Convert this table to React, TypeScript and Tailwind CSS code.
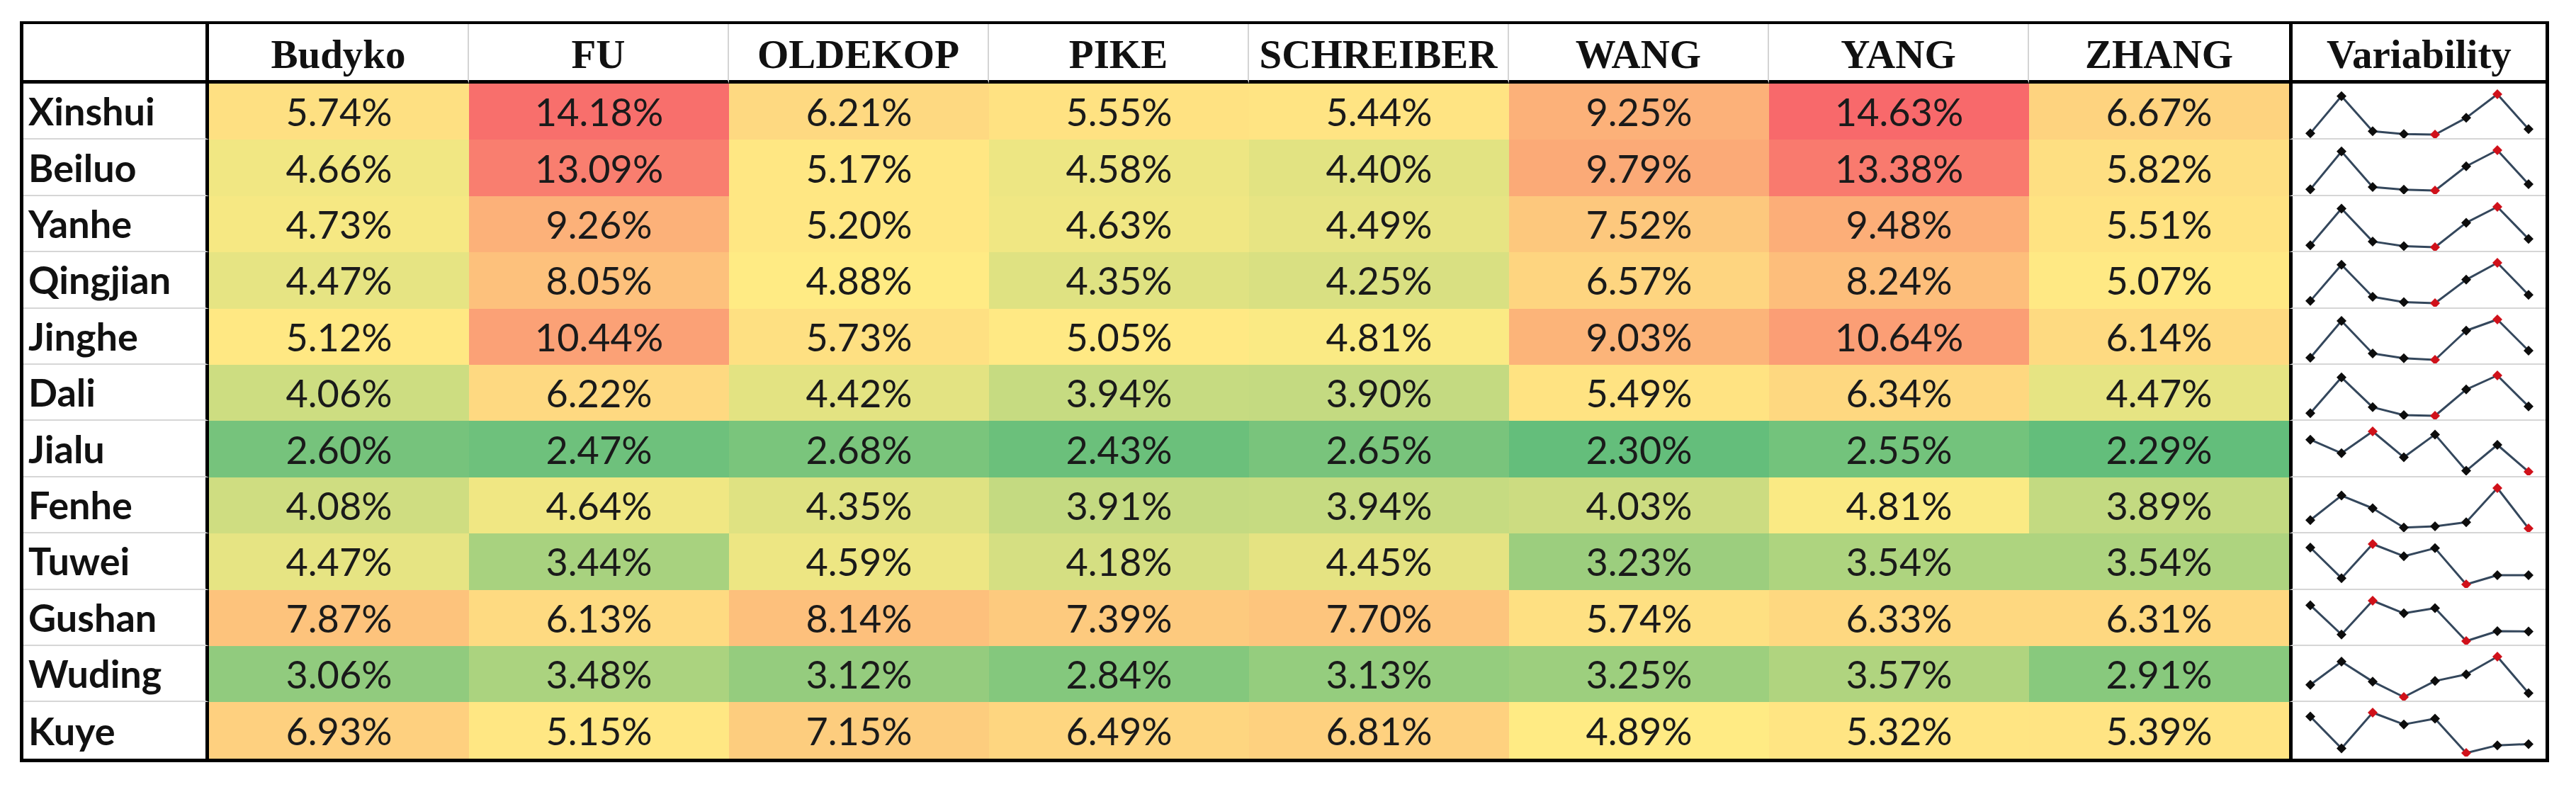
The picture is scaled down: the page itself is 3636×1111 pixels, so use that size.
import React from 'react'

type Row = { name: string; values: number[] }

const methods = ['Budyko', 'FU', 'OLDEKOP', 'PIKE', 'SCHREIBER', 'WANG', 'YANG', 'ZHANG']

const rows: Row[] = [
  { name: 'Xinshui', values: [5.74, 14.18, 6.21, 5.55, 5.44, 9.25, 14.63, 6.67] },
  { name: 'Beiluo', values: [4.66, 13.09, 5.17, 4.58, 4.4, 9.79, 13.38, 5.82] },
  { name: 'Yanhe', values: [4.73, 9.26, 5.2, 4.63, 4.49, 7.52, 9.48, 5.51] },
  { name: 'Qingjian', values: [4.47, 8.05, 4.88, 4.35, 4.25, 6.57, 8.24, 5.07] },
  { name: 'Jinghe', values: [5.12, 10.44, 5.73, 5.05, 4.81, 9.03, 10.64, 6.14] },
  { name: 'Dali', values: [4.06, 6.22, 4.42, 3.94, 3.9, 5.49, 6.34, 4.47] },
  { name: 'Jialu', values: [2.6, 2.47, 2.68, 2.43, 2.65, 2.3, 2.55, 2.29] },
  { name: 'Fenhe', values: [4.08, 4.64, 4.35, 3.91, 3.94, 4.03, 4.81, 3.89] },
  { name: 'Tuwei', values: [4.47, 3.44, 4.59, 4.18, 4.45, 3.23, 3.54, 3.54] },
  { name: 'Gushan', values: [7.87, 6.13, 8.14, 7.39, 7.7, 5.74, 6.33, 6.31] },
  { name: 'Wuding', values: [3.06, 3.48, 3.12, 2.84, 3.13, 3.25, 3.57, 2.91] },
  { name: 'Kuye', values: [6.93, 5.15, 7.15, 6.49, 6.81, 4.89, 5.32, 5.39] },
]

// excel style 3 colour scale: min green, 50th percentile yellow, max red
const all = rows.flatMap(r => r.values).sort((a, b) => a - b)
const lo = all[0]
const hi = all[all.length - 1]
const pos = (all.length - 1) / 2
const mid = (all[Math.floor(pos)] + all[Math.ceil(pos)]) / 2

const GREEN = [99, 190, 123]
const YELLOW = [255, 235, 132]
const RED = [248, 105, 107]

function mix(a: number[], b: number[], t: number) {
  const c = a.map((v, i) => Math.round(v + (b[i] - v) * t))
  return `rgb(${c[0]}, ${c[1]}, ${c[2]})`
}

function scaleColor(v: number) {
  if (v <= mid) return mix(GREEN, YELLOW, (v - lo) / (mid - lo))
  return mix(YELLOW, RED, (v - mid) / (hi - mid))
}

function Sparkline({ values }: { values: number[] }) {
  const min = Math.min(...values)
  const max = Math.max(...values)
  const iMin = values.indexOf(min)
  const iMax = values.indexOf(max)
  const pts = values.map((v, i) => ({
    x: 25 + i * 44,
    y: 15 + ((max - v) / (max - min)) * 57,
  }))
  const d = 7
  return (
    <svg width={357} height={77} className="block">
      <polyline
        points={pts.map(p => `${p.x},${p.y}`).join(' ')}
        fill="none"
        stroke="#34475c"
        strokeWidth={3}
        strokeLinejoin="round"
      />
      {pts.map((p, i) => (
        <polygon
          key={i}
          points={`${p.x},${p.y - d} ${p.x + d},${p.y} ${p.x},${p.y + d} ${p.x - d},${p.y}`}
          fill={i === iMin || i === iMax ? '#d0111a' : '#0d0d0d'}
        />
      ))}
    </svg>
  )
}

export default function App() {
  return (
    <div className="min-h-screen bg-white pl-[28px] pt-[30px]">
      <div className="w-[3570px] border-x-[5px] border-t-[4px] border-b-[5px] border-black">
        <div className="grid grid-cols-[262px_repeat(8,367px)_362px]">
          <div className="h-[84px] border-r-[5px] border-b-[5px] border-black" />
          {methods.map((m, i) => (
            <div
              key={m}
              className={`flex h-[84px] items-center justify-center border-b-[5px] border-b-black pt-[6px] font-['Liberation_Serif',serif] text-[57px] font-bold text-[#111111] ${
                i < methods.length - 1 ? 'border-r-2 border-r-[#d4d4d4]' : ''
              }`}
            >
              {m}
            </div>
          ))}
          <div className="flex h-[84px] items-center justify-center border-l-[5px] border-b-[5px] border-black pt-[6px] font-['Liberation_Serif',serif] text-[57px] font-bold text-[#111111]">
            Variability
          </div>

          {rows.map((row, r) => {
            const last = r === rows.length - 1
            return (
              <React.Fragment key={row.name}>
                <div
                  className={`flex h-[79.4px] items-center border-r-[5px] border-r-black pl-[7px] font-['Lato',sans-serif] text-[54px] font-bold text-[#111111] ${
                    last ? '' : 'border-b-2 border-b-[#d6d6d6]'
                  }`}
                >
                  {row.name}
                </div>
                {row.values.map((v, c) => (
                  <div
                    key={c}
                    className="flex h-[79.4px] items-center justify-center font-['Lato',sans-serif] text-[54px] text-[#1a1a1a]"
                    style={{ backgroundColor: scaleColor(v) }}
                  >
                    {v.toFixed(2)}%
                  </div>
                ))}
                <div
                  className={`h-[79.4px] border-l-[5px] border-l-black ${
                    last ? '' : 'border-b-2 border-b-[#d6d6d6]'
                  }`}
                >
                  <Sparkline values={row.values} />
                </div>
              </React.Fragment>
            )
          })}
        </div>
      </div>
    </div>
  )
}
